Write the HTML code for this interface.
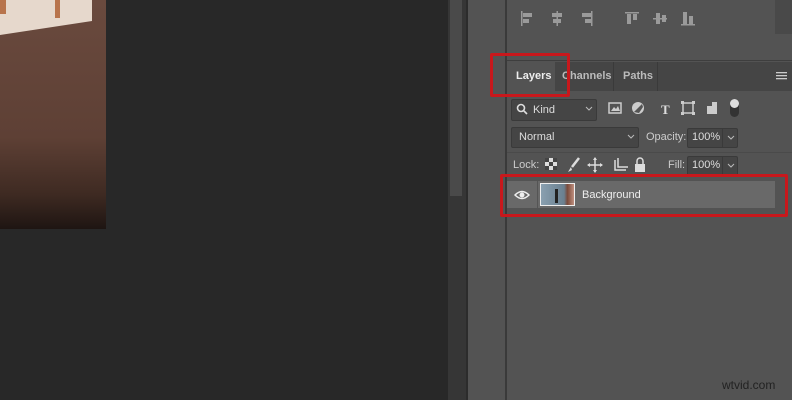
<html><head><style>
body{margin:0;width:792px;height:400px;overflow:hidden;background:#282828;font-family:"Liberation Sans",sans-serif;position:relative}
div,svg{position:absolute;box-sizing:border-box}
.t{color:#ddd;font-size:11px}
.box{background:#454545;border:1px solid #3a3a3a;border-radius:2px}
.red{border:3px solid #c8181c;border-radius:2px}
</style></head><body>
<div style="left:0;top:0;width:106px;height:229px;background:linear-gradient(#6a4a3e 0%,#5e4035 60%,#3e2a22 85%,#1e1512 100%)"></div>
<div style="left:0;top:0;width:92px;height:35px;background:#e6d8cc;clip-path:polygon(0 0,100% 0,100% 60%,0 100%)"></div>
<div style="left:55px;top:0;width:5px;height:18px;background:#b8744c"></div>
<div style="left:0;top:0;width:6px;height:14px;background:#b8744c"></div>
<div style="left:448px;top:0;width:18px;height:400px;background:#363636"></div>
<div style="left:450px;top:0;width:12px;height:196px;background:#4a4a4a"></div>
<div style="left:466px;top:0;width:2px;height:400px;background:#2c2c2c"></div>
<div style="left:468px;top:0;width:37px;height:400px;background:#535353"></div>
<div style="left:505px;top:0;width:2px;height:400px;background:#3a3a3a"></div>
<div style="left:507px;top:0;width:285px;height:400px;background:#535353"></div>
<svg style="left:507px;top:0" width="285" height="60" fill="#9a9a9a">
<rect x="14" y="11" width="1.5" height="15"/><rect x="16" y="13" width="9" height="4"/><rect x="16" y="19" width="6" height="4"/>
<rect x="49.5" y="11" width="1.5" height="15"/><rect x="45" y="13" width="10" height="4"/><rect x="46" y="19" width="8" height="4"/>
<rect x="84" y="11" width="1.5" height="15"/><rect x="75" y="13" width="9" height="4"/><rect x="78" y="19" width="6" height="4"/>
<rect x="118" y="12" width="14" height="1.5"/><rect x="120" y="14" width="4" height="10"/><rect x="126" y="14" width="4" height="6"/>
<rect x="146" y="18" width="14" height="1.5"/><rect x="149" y="13" width="4" height="11"/><rect x="155" y="15" width="4" height="7"/>
<rect x="174" y="24" width="14" height="1.5"/><rect x="176" y="12" width="4" height="12"/><rect x="182" y="16" width="4" height="8"/>
</svg>
<div style="left:775px;top:0;width:17px;height:34px;background:#494949"></div>
<div style="left:507px;top:60px;width:285px;height:1px;background:#3e3e3e"></div>
<div style="left:507px;top:62px;width:285px;height:29px;background:#454545"></div>
<div style="left:507px;top:62px;width:48px;height:29px;background:#535353"></div>
<div class="t" style="left:516px;top:70px;font-weight:bold;color:#eee">Layers</div>
<div class="t" style="left:562px;top:70px;color:#bbb;font-weight:bold">Channels</div>
<div style="left:613px;top:62px;width:1px;height:29px;background:#3a3a3a"></div>
<div class="t" style="left:623px;top:70px;color:#bbb;font-weight:bold">Paths</div>
<div style="left:657px;top:62px;width:1px;height:29px;background:#3a3a3a"></div>
<svg style="left:776px;top:72px" width="11" height="8" fill="#ccc"><rect y="0" width="11" height="1.3"/><rect y="3" width="11" height="1.3"/><rect y="6" width="11" height="1.3"/></svg>
<div class="box" style="left:511px;top:99px;width:86px;height:22px"></div>
<svg style="left:516px;top:103px" width="12" height="12" fill="none" stroke="#ddd" stroke-width="1.6"><circle cx="5" cy="5" r="3.5"/><path d="M7.5 7.5L11 11"/></svg>
<div class="t" style="left:533px;top:104px">Kind</div>
<svg style="left:585px;top:106px" width="8" height="6" fill="none" stroke="#bbb"><path d="M1 1l3 3 3-3"/></svg>
<svg style="left:605px;top:98px" width="140" height="24">
<rect x="4" y="5" width="12" height="10" fill="none" stroke="#ccc" stroke-width="1.5"/><path d="M6 13l3-4 2 2 2-3 2 5z" fill="#ccc"/>
<circle cx="33" cy="10" r="6" fill="#ccc"/><path d="M29 14L37 6 38 9 34 15z" fill="#555"/>
<text x="56" y="16" fill="#ddd" font-size="13" font-weight="bold" font-family="Liberation Serif">T</text>
<rect x="78" y="5" width="10" height="10" fill="none" stroke="#ccc" stroke-width="1.5"/><rect x="76" y="3" width="3" height="3" fill="#ccc"/><rect x="87" y="3" width="3" height="3" fill="#ccc"/><rect x="76" y="14" width="3" height="3" fill="#ccc"/><rect x="87" y="14" width="3" height="3" fill="#ccc"/>
<path d="M102 8h5v-4h5v12h-10z" fill="#ccc"/>
<rect x="125" y="1" width="9" height="18" rx="4.5" fill="#333"/><circle cx="129.5" cy="5.5" r="4.5" fill="#ddd"/>
</svg>
<div class="box" style="left:511px;top:127px;width:128px;height:21px"></div>
<div class="t" style="left:519px;top:131px">Normal</div>
<svg style="left:627px;top:134px" width="8" height="6" fill="none" stroke="#bbb"><path d="M1 1l3 3 3-3"/></svg>
<div class="t" style="left:646px;top:131px;color:#ccc">Opacity:</div>
<div class="box" style="left:687px;top:128px;width:51px;height:20px"></div>
<div class="t" style="left:692px;top:131px">100%</div>
<div style="left:722px;top:129px;width:1px;height:18px;background:#3a3a3a"></div>
<svg style="left:727px;top:135px" width="8" height="6" fill="none" stroke="#bbb"><path d="M1 1l3 3 3-3"/></svg>
<div style="left:507px;top:152px;width:285px;height:1px;background:#4a4a4a"></div>
<div class="t" style="left:513px;top:159px;color:#ccc">Lock:</div>
<svg style="left:543px;top:155px" width="110" height="20">
<rect x="2" y="3" width="12" height="12" fill="#ddd"/><rect x="2" y="3" width="4" height="4" fill="#444"/><rect x="10" y="3" width="4" height="4" fill="#444"/><rect x="6" y="7" width="4" height="4" fill="#444"/><rect x="2" y="11" width="4" height="4" fill="#444"/><rect x="10" y="11" width="4" height="4" fill="#444"/>
<path d="M36 3L29 12" stroke="#ddd" stroke-width="2.5"/><path d="M28 12l-3 5 4-2z" fill="#ddd"/>
<path d="M52 3v14M45 10h14" stroke="#ddd" stroke-width="1.5"/><path d="M52 2l-2 3h4zM52 18l-2-3h4zM44 10l3-2v4zM60 10l-3-2v4z" fill="#ddd"/>
<path d="M72 5v10h11M75 3v9h10" fill="none" stroke="#ddd" stroke-width="1.5"/>
<rect x="92" y="9" width="10" height="8" fill="#ddd"/><path d="M94 9V6a3 3 0 0 1 6 0v3" fill="none" stroke="#ddd" stroke-width="1.5"/>
</svg>
<div class="t" style="left:668px;top:159px;color:#ccc">Fill:</div>
<div class="box" style="left:687px;top:156px;width:51px;height:20px"></div>
<div class="t" style="left:692px;top:159px">100%</div>
<div style="left:722px;top:157px;width:1px;height:18px;background:#3a3a3a"></div>
<svg style="left:727px;top:163px" width="8" height="6" fill="none" stroke="#bbb"><path d="M1 1l3 3 3-3"/></svg>
<div style="left:507px;top:181px;width:268px;height:27px;background:#696969"></div>
<div style="left:537px;top:181px;width:1px;height:27px;background:#555"></div>
<svg style="left:514px;top:189px" width="16" height="12"><path d="M1 6Q8 -1 15 6Q8 13 1 6z" fill="none" stroke="#eee" stroke-width="1.5"/><circle cx="8" cy="6" r="2.5" fill="#eee"/></svg>
<div style="left:540px;top:183px;width:35px;height:23px;background:linear-gradient(90deg,#8aa0b0,#6a8090 70%,#7a4a3a 80%,#c09080);border:1px solid #eee"></div>
<div style="left:555px;top:189px;width:3px;height:14px;background:#222"></div>
<div class="t" style="left:582px;top:189px;color:#eee">Background</div>
<div class="red" style="left:490px;top:53px;width:80px;height:44px"></div>
<div class="red" style="left:500px;top:174px;width:288px;height:43px"></div>
<div style="left:722px;top:378px;color:#222;font-size:12px">wtvid.com</div>
</body></html>
